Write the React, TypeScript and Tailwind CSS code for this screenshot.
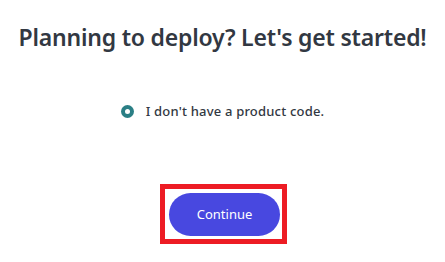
export default function App() {
  return (
    <div
      className="w-[445px] h-[262px] bg-white flex flex-col items-center text-[#323842]"
      style={{ fontFamily: '"Noto Sans", "Open Sans", sans-serif' }}
    >
      <h1 className="mt-[22px] text-[23px] leading-[30px] font-semibold tracking-[-0.2px]">
        Planning to deploy? Let's get started!
      </h1>

      <label className="mt-[50px] flex items-center gap-[12px] text-[13px] leading-[18px] font-medium">
        <span className="w-[13px] h-[13px] rounded-full bg-[#2b7f85] flex items-center justify-center">
          <span className="w-[5px] h-[5px] rounded-full bg-white" />
        </span>
        <span className="tracking-[0.2px]">I don't have a product code.</span>
      </label>

      <div className="mt-[64px] ml-[2px] border-[5px] border-[#ed1c24] pl-[4px] pr-[2px] pt-[4px] pb-[3px]">
        <button className="w-[111px] h-[43px] rounded-full bg-[#4848e0] text-white text-[13px]">
          Continue
        </button>
      </div>
    </div>
  );
}
